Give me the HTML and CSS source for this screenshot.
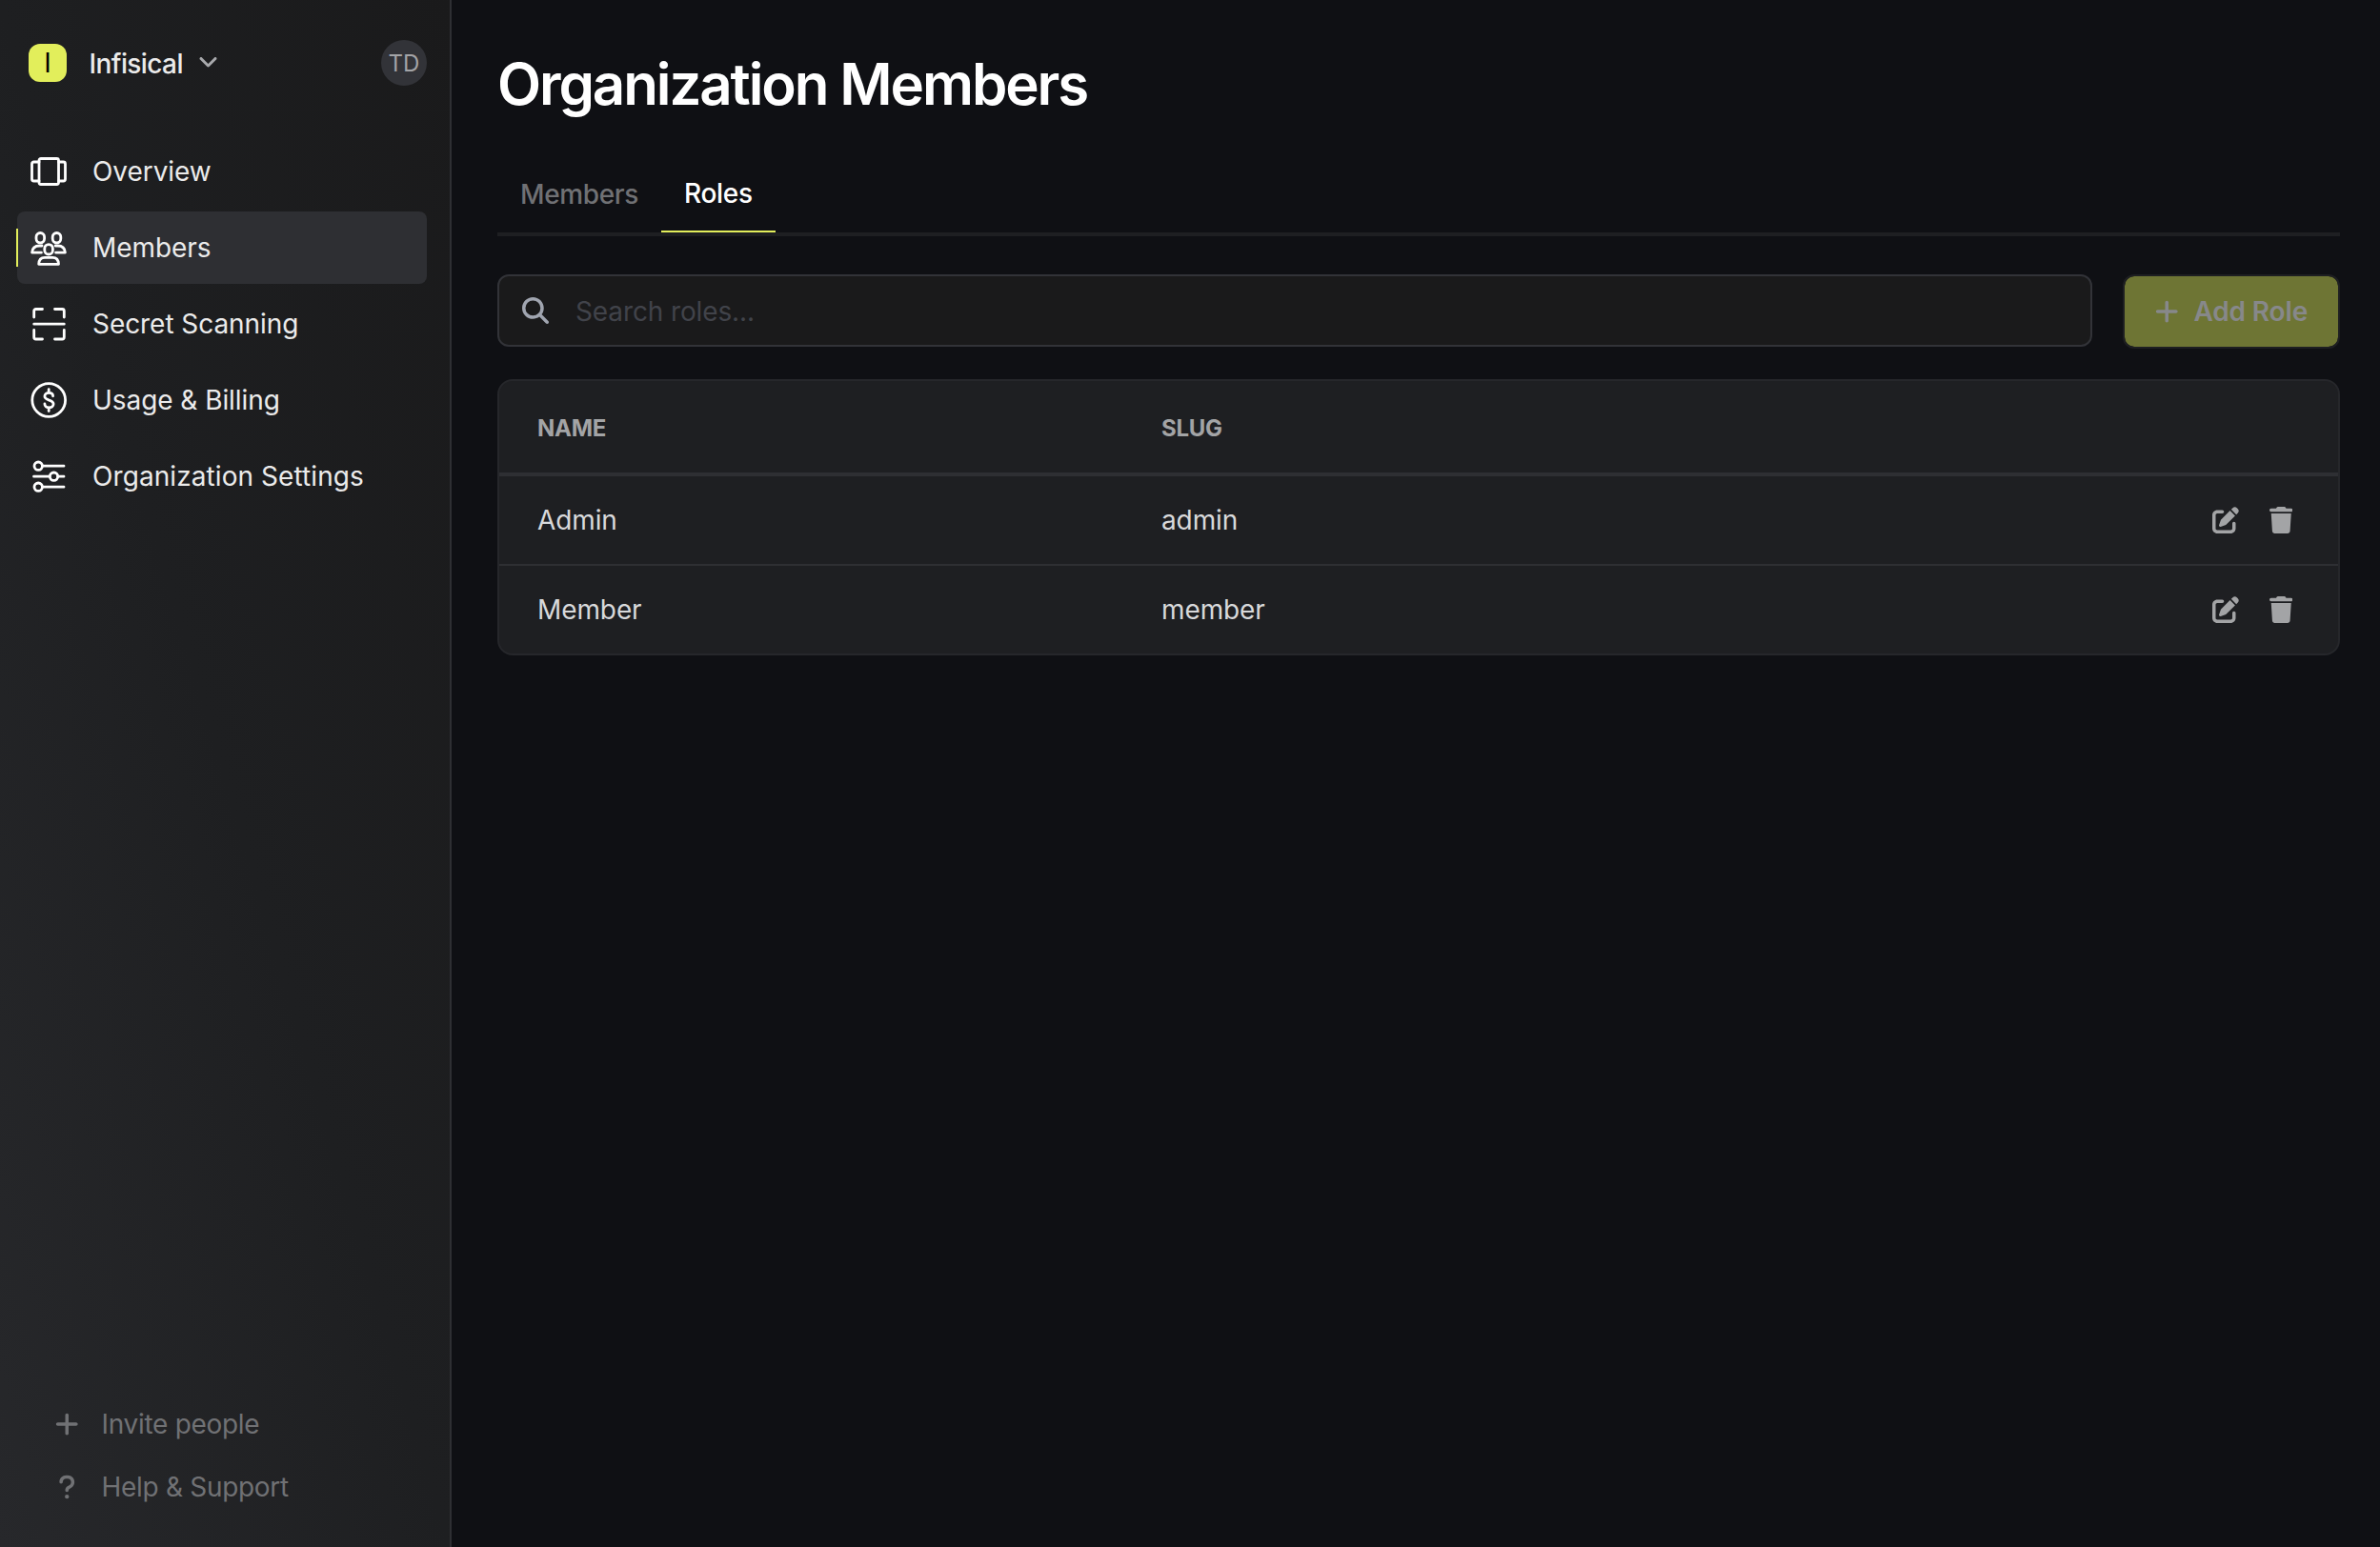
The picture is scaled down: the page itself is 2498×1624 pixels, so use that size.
FILE: index.html
```html
<!DOCTYPE html>
<html lang="en">
<head>
<meta charset="utf-8">
<title>Organization Members</title>
<link rel="stylesheet" href="styles.css">
</head>
<body>
<svg class="sprite" aria-hidden="true">
  <symbol id="plus" viewBox="0 0 448 512"><path d="M256 80c0-17.7-14.3-32-32-32s-32 14.3-32 32V224H48c-17.7 0-32 14.3-32 32s14.3 32 32 32H192V432c0 17.7 14.3 32 32 32s32-14.3 32-32V288H400c17.7 0 32-14.3 32-32s-14.3-32-32-32H256V80z"/></symbol>
  <symbol id="edit" viewBox="0 0 512 512"><path d="M471.6 21.7c-21.9-21.9-57.3-21.9-79.2 0L362.3 51.7l97.9 97.9 30.1-30.1c21.9-21.9 21.9-57.3 0-79.2L471.6 21.7zm-299.2 220c-6.1 6.1-10.8 13.6-13.5 21.9l-29.6 88.8c-2.9 8.6-.6 18.1 5.8 24.6s15.9 8.7 24.6 5.8l88.8-29.6c8.2-2.7 15.7-7.4 21.9-13.5L437.7 172.3 339.7 74.3 172.4 241.7zM96 64C43 64 0 107 0 160V416c0 53 43 96 96 96H352c53 0 96-43 96-96V320c0-17.7-14.3-32-32-32s-32 14.3-32 32v96c0 17.7-14.3 32-32 32H96c-17.7 0-32-14.3-32-32V160c0-17.7 14.3-32 32-32h96c17.7 0 32-14.3 32-32s-14.3-32-32-32H96z"/></symbol>
  <symbol id="trash" viewBox="0 0 448 512"><path d="M135.2 17.7L128 32H32C14.3 32 0 46.3 0 64S14.3 96 32 96H416c17.7 0 32-14.3 32-32s-14.3-32-32-32H320l-7.2-14.3C307.4 6.8 296.3 0 284.2 0H163.8c-12.1 0-23.2 6.8-28.6 17.7zM416 128H32L53.2 467c1.6 25.3 22.6 45 47.9 45H346.9c25.3 0 46.3-19.7 47.9-45L416 128z"/></symbol>
</svg>
<div class="app">
  <aside class="sidebar">
    <header class="org">
      <span class="org-logo">I</span>
      <span class="org-name">Infisical</span>
      <svg class="chevron" viewBox="0 0 448 512"><path d="M201.4 342.6c12.5 12.5 32.8 12.5 45.3 0l160-160c12.5-12.5 12.5-32.8 0-45.3s-32.8-12.5-45.3 0L224 274.7 86.6 137.4c-12.5-12.5-32.8-12.5-45.3 0s-12.5 32.8 0 45.3l160 160z"/></svg>
      <span class="avatar">TD</span>
    </header>
    <nav class="nav">
      <a class="nav-item">
        <svg class="nav-icon" viewBox="0 0 40 40"><rect x="10" y="6.500" width="20.500" height="27" rx="2"/><path d="M10 10H4.500a2 2 0 0 0-2 2v16a2 2 0 0 0 2 2H10M30.500 10H35.500a2 2 0 0 1 2 2v16a2 2 0 0 1-2 2H30.500"/></svg>
        <span>Overview</span>
      </a>
      <a class="nav-item active">
        <svg class="nav-icon" viewBox="0 0 40 40"><rect x="7" y="4.500" width="8.600" height="10.400" rx="4.300"/><rect x="24.200" y="4.500" width="8.600" height="10.400" rx="4.300"/><rect x="15.800" y="16.600" width="8.600" height="10.400" rx="4.300"/><path d="M13 18H10.500c-4.500 0-7.600 2.600-7.900 7.200H12.400M27.200 18H29.500c4.500 0 7.600 2.600 7.900 7.200H27.600M9.700 37.300c.1-4.400 2.300-7 6.300-7h8.200c4 0 6.200 2.600 6.300 7z"/></svg>
        <span>Members</span>
      </a>
      <a class="nav-item">
        <svg class="nav-icon" viewBox="0 0 40 40"><path d="M4.700 13V6.500a2 2 0 0 1 2-2H13.500M26.500 4.500H34.300a2 2 0 0 1 2 2V13M4.700 26.500V34a2 2 0 0 0 2 2H13.500M26.500 36H34.300a2 2 0 0 0 2-2V26.500M4.700 20.200H36.300"/></svg>
        <span>Secret Scanning</span>
      </a>
      <a class="nav-item">
        <svg class="nav-icon" viewBox="0 0 40 40"><circle cx="20.200" cy="20" r="17.400"/><path d="M24.600 15.800c0-2.200-1.700-3.500-4.200-3.500s-4.500 1.500-4.500 3.800c0 5 9.200 2.900 9.200 7.900 0 2.300-2 3.900-4.600 3.900s-4.600-1.500-4.600-3.900M20.200 8.700v3.600M20.200 28v3.600"/></svg>
        <span>Usage &amp; Billing</span>
      </a>
      <a class="nav-item wide">
        <svg class="nav-icon" viewBox="0 0 40 40"><circle cx="9.200" cy="9.200" r="4.200"/><circle cx="25.500" cy="20.200" r="4.200"/><circle cx="9.200" cy="31.200" r="4.200"/><path d="M13.500 9.200H36M4.500 20.200H21.200M29.800 20.200H36M13.500 31.200H36"/></svg>
        <span>Organization Settings</span>
      </a>
    </nav>
    <footer class="side-footer">
      <a class="side-link"><svg class="fa" viewBox="0 0 448 512"><use href="#plus"/></svg><span>Invite people</span></a>
      <a class="side-link"><svg class="fa" viewBox="-64 0 448 512"><path d="M80 160c0-35.300 28.700-64 64-64h32c35.300 0 64 28.700 64 64v3.600c0 21.800-11.100 42.100-29.400 53.800l-42.200 27.100c-25.200 16.200-40.400 44.100-40.400 74V320c0 17.700 14.300 32 32 32s32-14.300 32-32v-1.400c0-8.200 4.200-15.800 11-20.200l42.200-27.100c36.600-23.600 58.800-64.100 58.800-107.700V160c0-70.700-57.300-128-128-128H144C73.300 32 16 89.300 16 160c0 17.700 14.300 32 32 32s32-14.300 32-32zm80 320a40 40 0 1 0 0-80 40 40 0 1 0 0 80z"/></svg><span>Help &amp; Support</span></a>
    </footer>
  </aside>
  <main class="main">
    <h1 class="title">Organization Members</h1>
    <div class="tabs">
      <button class="tab">Members</button>
      <button class="tab selected">Roles</button>
    </div>
    <div class="toolbar">
      <label class="search">
        <svg class="search-icon" viewBox="0 0 512 512"><path d="M416 208c0 45.900-14.900 88.300-40 122.700L502.600 457.400c12.500 12.500 12.500 32.800 0 45.300s-32.800 12.500-45.300 0L330.700 376c-34.400 25.200-76.800 40-122.700 40C93.100 416 0 322.900 0 208S93.100 0 208 0S416 93.100 416 208zM208 352a144 144 0 1 0 0-288 144 144 0 1 0 0 288z"/></svg>
        <input class="search-input" type="text" placeholder="Search roles...">
      </label>
      <button class="add"><svg class="fa" viewBox="0 0 448 512"><use href="#plus"/></svg><span>Add Role</span></button>
    </div>
    <section class="table">
      <div class="row head"><span>NAME</span><span>SLUG</span><span></span></div>
      <div class="row">
        <span>Admin</span><span>admin</span>
        <span class="actions"><svg class="fa-square" viewBox="0 0 512 512"><use href="#edit"/></svg><svg class="fa" viewBox="0 0 448 512"><use href="#trash"/></svg></span>
      </div>
      <div class="row">
        <span>Member</span><span>member</span>
        <span class="actions"><svg class="fa-square" viewBox="0 0 512 512"><use href="#edit"/></svg><svg class="fa" viewBox="0 0 448 512"><use href="#trash"/></svg></span>
      </div>
    </section>
  </main>
</div>
</body>
</html>
```
FILE: styles.css
```css
* { box-sizing: border-box; }

body {
  margin: 0;
  background: #0f1014;
  color: #ebebeb;
  font: 400 28px/40px Inter, "Liberation Sans", sans-serif;
}

button, input { font: inherit; border: 0; background: none; padding: 0; }
svg { display: block; flex: none; fill: currentColor; }
.sprite { position: absolute; width: 0; height: 0; }
.fa { width: 24.5px; height: 28px; }
.fa-square { width: 28px; height: 28px; }

.app { display: flex; height: 1624px; }

/* Sidebar */
.sidebar {
  display: flex;
  flex-direction: column;
  width: 474px;
  flex: none;
  border-right: 2px solid #2e2f33;
  background: linear-gradient(to top right, #27282b, #1e1f21 50%, #1a1a1b);
}

.org {
  display: flex;
  align-items: center;
  height: 48px;
  margin: 42px 24px 52px 30px;
}
.org-logo {
  width: 40px;
  height: 40px;
  border-radius: 12px;
  background: #e2ee5b;
  color: #000;
  text-align: center;
}
.org-name { margin-left: 23.5px; padding-top: 1px; font-weight: 500; letter-spacing: -0.6px; }
.chevron { width: 21px; height: 24px; margin-left: 16.5px; color: #a8a9ac; }
.avatar {
  width: 48px;
  height: 48px;
  margin-left: auto;
  padding-top: 1px;
  border-radius: 50%;
  background: #323338;
  color: #a3a4a7;
  font-size: 24px;
  line-height: 48px;
  text-align: center;
}

.nav { display: flex; flex-direction: column; gap: 4px; padding: 0 24px 0 18px; }
.nav-item {
  position: relative;
  display: flex;
  align-items: center;
  gap: 26px;
  height: 76px;
  padding-left: 13px;
  border-radius: 8px;
  letter-spacing: -0.06px;
}
.nav-item.wide { letter-spacing: 0.08px; }
.nav-item.active { background: #2e2f33; }
.nav-item.active::before {
  content: "";
  position: absolute;
  left: -1px;
  top: 18px;
  width: 2px;
  height: 40px;
  background: #e2ee5b;
}
.nav-icon {
  width: 40px;
  height: 40px;
  fill: none;
  stroke: #fff;
  stroke-width: 2.8;
  stroke-linecap: round;
  stroke-linejoin: round;
}

.side-footer { margin-top: auto; padding: 0 0 30px 58px; color: #707174; letter-spacing: -0.3px; }
.side-link { display: flex; align-items: center; gap: 24px; height: 66px; }

/* Main column */
.main { flex: 1; padding: 52px 42px 0 48px; }
.title {
  margin: 0;
  color: #fff;
  font-size: 60px;
  font-weight: 600;
  line-height: 72px;
  letter-spacing: -2.1px;
}

.tabs { display: flex; margin-top: 40px; height: 84px; border-bottom: 4px solid #1e1f22; }
.tab { padding: 0 24px; color: #707174; font-weight: 500; letter-spacing: -0.38px; }
.tab.selected { color: #fff; border-bottom: 2px solid #e2ee5b; letter-spacing: -0.25px; }

.toolbar { display: flex; gap: 32px; margin-top: 40px; height: 78px; }
.search {
  display: flex;
  flex: 1;
  align-items: center;
  gap: 28px;
  height: 76px;
  padding: 0 24px;
  border: 2px solid #323338;
  border-radius: 12px;
  background: #1a1a1b;
}
.search-icon { width: 28px; height: 28px; color: #a0a5b0; }
.search-input { flex: 1; padding-top: 2px; color: #ebebeb; outline: none; letter-spacing: -0.12px; }
.search-input::placeholder { color: #41434a; opacity: 1; }
.add {
  display: flex;
  align-items: center;
  justify-content: center;
  gap: 16px;
  width: 228px;
  border: 2px solid #1e1f22;
  border-radius: 12px;
  background: #6e7534;
  background-clip: padding-box;
  color: #87888a;
  font-weight: 600;
  letter-spacing: -0.15px;
}

.table {
  margin-top: 32px;
  border: 2px solid #26272b;
  border-radius: 16px;
  background: #1e1f22;
  color: #d8d9db;
}
.row {
  display: grid;
  grid-template-columns: 655px 1fr auto;
  align-items: center;
  height: 92px;
  padding: 0 48px 0 40px;
  letter-spacing: -0.1px;
}
.row + .row + .row { height: 94px; border-top: 2px solid #2e2f33; }
.row.head {
  height: 100px;
  padding-top: 3px;
  border-bottom: 4px solid #2e2f33;
  color: #a3a4a6;
  font-size: 24px;
  font-weight: 700;
  letter-spacing: -0.25px;
}
.actions { display: flex; align-items: center; gap: 32px; color: #a3a4a6; }
```
